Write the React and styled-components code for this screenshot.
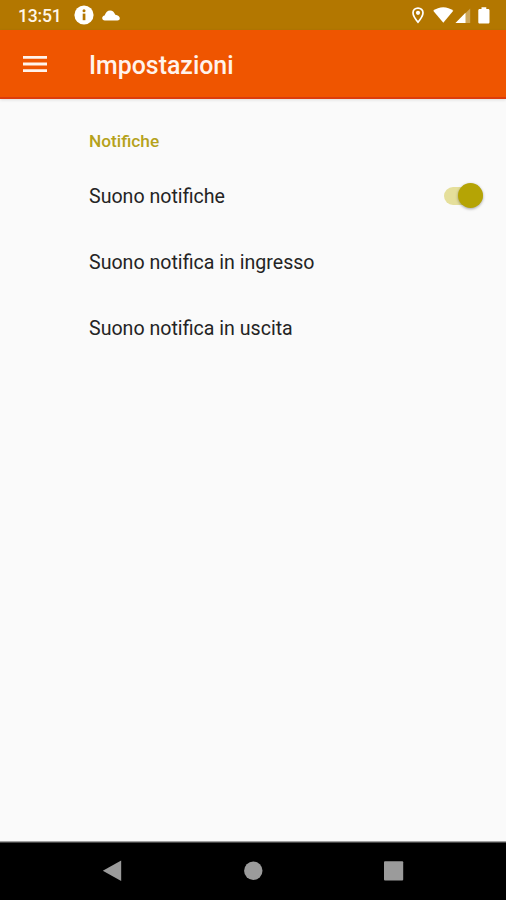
import { useState } from "react";
import styled, { createGlobalStyle } from "styled-components";

const items = ["Suono notifica in ingresso", "Suono notifica in uscita"];

export default function App() {
  const [sound, setSound] = useState(true);

  return (
    <>
      <GlobalStyle />
      <Screen>
        <StatusBar>
          <Time>13:51</Time>
          <InfoIcon viewBox="0 0 20 20">
            <circle cx="10" cy="10" r="9.6" fill="#fff" />
            <circle cx="10" cy="5.8" r="1.5" fill="#b37700" />
            <path d="M8.700 8.600h2.700v6.600H8.700z" fill="#b37700" />
          </InfoIcon>
          <CloudIcon viewBox="0 0 18 11">
            <path
              d="M2.800 10.500C1.200 10.500.2 9.500.2 8.100c0-1.300.9-2.300 2.400-2.600C3.700 2.400 5.500.5 8.200.5c2.300 0 3.900 1.600 5.100 4.200 2.600.5 4.500 1.700 4.500 3.500 0 1.300-1 2.300-2.400 2.300z"
              fill="#fff"
            />
          </CloudIcon>
          <StatusIcons viewBox="0 0 80 18">
            <path
              d="M8 2.100c-2.900 0-5 2.100-5 4.700 0 3.500 5 9.400 5 9.400s5-5.900 5-9.400c0-2.600-2.100-4.700-5-4.700z"
              fill="none"
              stroke="#fff"
              strokeWidth="1.700"
            />
            <circle cx="8" cy="6.800" r="2.100" fill="#fff" />
            <path d="M23.200 4.800C29-.1 37.500-.1 43.300 4.800L33.300 16.800z" fill="#fff" />
            <path d="M60.200 2.500v14.500H45.500z" fill="#fff" fillOpacity=".35" />
            <path d="M55.500 6.800V17h-10z" fill="#fff" />
            <path
              d="M71.500 1.200h4.800v1.800h1.900c.7 0 1.300.6 1.300 1.300v11.900c0 .7-.6 1.300-1.300 1.300h-8.600c-.7 0-1.300-.6-1.300-1.300V4.300c0-.7.6-1.300 1.300-1.300h1.900z"
              fill="#fff"
            />
          </StatusIcons>
        </StatusBar>
        <AppBar>
          <MenuButton aria-label="Menu">
            <svg width="24" height="18" viewBox="0 0 24 18">
              <path d="M0 .9h24v2.800H0zM0 7.600h24v2.800H0zM0 14.300h24v2.800H0z" fill="#fff3ec" />
            </svg>
          </MenuButton>
          <Title>Impostazioni</Title>
        </AppBar>
        <Settings>
          <Category>Notifiche</Category>
          <Row>
            <Label>Suono notifiche</Label>
            <Switch
              role="switch"
              aria-checked={sound}
              aria-label="Suono notifiche"
              onClick={() => setSound(!sound)}
            >
              <Thumb $on={sound} />
            </Switch>
          </Row>
          {items.map((item) => (
            <Row key={item}>
              <Label>{item}</Label>
            </Row>
          ))}
        </Settings>
        <NavBar>
          <svg width="20" height="22" viewBox="0 0 20 22">
            <path d="M.8 10.700L19.200.500v20.400z" fill="#9b9b9b" />
          </svg>
          <svg width="20" height="22" viewBox="0 0 20 22">
            <circle cx="10.300" cy="10.700" r="9.200" fill="#9b9b9b" />
          </svg>
          <svg width="20" height="22" viewBox="0 0 20 22">
            <rect x="0" y="1.300" width="19.200" height="19.200" rx="1" fill="#9b9b9b" />
          </svg>
        </NavBar>
      </Screen>
    </>
  );
}

const GlobalStyle = createGlobalStyle`
  * {
    box-sizing: border-box;
  }

  body {
    margin: 0;
    font-family: Roboto, sans-serif;
  }
`;

const Screen = styled.div`
  display: flex;
  flex-direction: column;
  height: 900px;
  background-color: #fafafa;
  overflow: hidden;
`;

const StatusBar = styled.header`
  display: flex;
  align-items: center;
  height: 30px;
  padding: 0 16px 0 18px;
  background-color: #b37700;
`;

const Time = styled.span`
  width: 56px;
  padding-top: 2px;
  color: #fff6e8;
  font-size: 17.6px;
  font-weight: 500;
  letter-spacing: -0.2px;
  line-height: 20px;
`;

const InfoIcon = styled.svg`
  width: 20px;
  height: 20px;
`;

const CloudIcon = styled.svg`
  width: 18px;
  height: 11px;
  margin-left: 8px;
`;

const StatusIcons = styled.svg`
  width: 80px;
  height: 18px;
  margin-left: auto;
`;

const AppBar = styled.div`
  display: flex;
  align-items: center;
  height: 69px;
  padding-left: 23px;
  background-color: #ef5500;
  border-bottom: 2px solid #dc3c0c;
  box-shadow: 0 1px 3px rgba(0, 0, 0, 0.12);
`;

const MenuButton = styled.button`
  display: flex;
  width: 66px;
  padding: 1px 0 0;
  border: none;
  background: none;
  cursor: pointer;
`;

const Title = styled.h1`
  margin: 4px 0 0;
  color: #fff3ec;
  font-size: 24.9px;
  font-weight: 500;
  line-height: 30px;
`;

const Settings = styled.main`
  flex: 1;
  padding: 30px 23px 0 89px;
`;

const Category = styled.h2`
  margin: 0;
  height: 34px;
  color: #b5a21b;
  font-size: 17.3px;
  font-weight: 500;
  line-height: 24px;
`;

const Row = styled.div`
  display: flex;
  align-items: center;
  justify-content: space-between;
  height: 66px;
`;

const Label = styled.span`
  padding-top: 2px;
  color: #242424;
  font-size: 19.6px;
  line-height: 24px;
`;

const Switch = styled.button`
  display: flex;
  align-items: center;
  width: 39px;
  height: 18px;
  padding: 0;
  margin-bottom: 1px;
  border: none;
  border-radius: 9px;
  background-color: #e5df9b;
  cursor: pointer;
`;

const Thumb = styled.span`
  width: 25px;
  height: 25px;
  margin-left: ${({ $on }) => ($on ? "14px" : "0")};
  border-radius: 50%;
  background-color: #b5a405;
  box-shadow: 0 1px 3px rgba(0, 0, 0, 0.35);
`;

const NavBar = styled.nav`
  display: flex;
  justify-content: space-between;
  align-items: center;
  height: 59px;
  padding: 0 102px;
  background-color: #000;
  border-top: 1px solid #a0a0a0;
  box-shadow: inset 0 1px 0 #444;
`;
